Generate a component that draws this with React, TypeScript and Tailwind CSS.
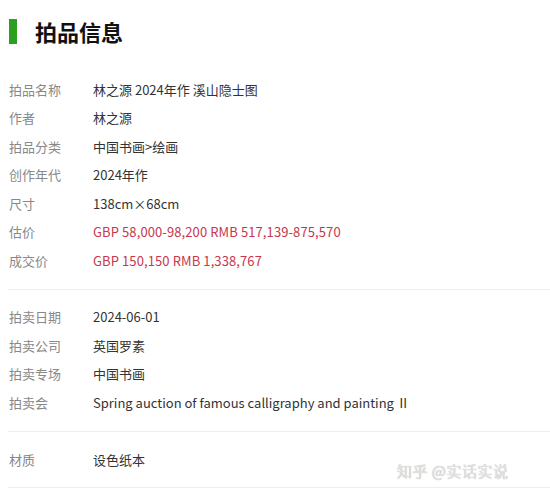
const basic = [
  { label: '拍品名称', value: '林之源 2024年作 溪山隐士图' },
  { label: '作者', value: '林之源' },
  { label: '拍品分类', value: '中国书画>绘画' },
  { label: '创作年代', value: '2024年作' },
  { label: '尺寸', value: '138cm×68cm' },
  { label: '估价', value: 'GBP 58,000-98,200 RMB 517,139-875,570', red: true },
  { label: '成交价', value: 'GBP 150,150 RMB 1,338,767', red: true },
];

const sale = [
  { label: '拍卖日期', value: '2024-06-01' },
  { label: '拍卖公司', value: '英国罗素' },
  { label: '拍卖专场', value: '中国书画' },
  { label: '拍卖会', value: 'Spring auction of famous calligraphy and painting Ⅱ' },
];

type Row = { label: string; value: string; red?: boolean };

function Rows({ rows }: { rows: Row[] }) {
  return (
    <div className="flex flex-col">
      {rows.map((r, i) => (
        <div key={i} className="flex h-[28.5px] items-center text-[13px]">
          <span className="w-[84px] shrink-0 text-[#888]">{r.label}</span>
          <span className={r.red ? 'text-[#c9374c] tracking-[0.1px]' : 'text-[#333]'}>{r.value}</span>
        </div>
      ))}
    </div>
  );
}

export default function App() {
  return (
    <div
      className="relative w-[550px] h-[495px] bg-white overflow-hidden"
      style={{ fontFamily: '"Noto Sans CJK SC", "Noto Sans", sans-serif' }}
    >
      <div className="flex items-center gap-[18px] pl-[9px] pt-[19px]">
        <div className="w-[8px] h-[25px] bg-[#2f9c22]" />
        <h1 className="text-[22px] leading-[25px] font-bold text-[#111]">拍品信息</h1>
      </div>

      <div className="pl-[9px] pt-[31px] pb-[14px]">
        <Rows rows={basic} />
      </div>
      <div className="ml-[8px] border-t border-[#eee]" />

      <div className="pl-[9px] pt-[13px] pb-[14px]">
        <Rows rows={sale} />
      </div>
      <div className="ml-[8px] border-t border-[#eee]" />

      <div className="pl-[9px] pt-[14px] pb-[13px]">
        <Rows rows={[{ label: '材质', value: '设色纸本' }]} />
      </div>
      <div className="ml-[8px] border-t border-[#eee]" />

      <div
        className="absolute left-[397px] top-[460px] text-[15px] font-normal text-[#e2e2e2] tracking-[0.5px]"
        style={{ textShadow: '0 0 1px #aaa' }}
      >
        知乎 @实话实说
      </div>
    </div>
  );
}
